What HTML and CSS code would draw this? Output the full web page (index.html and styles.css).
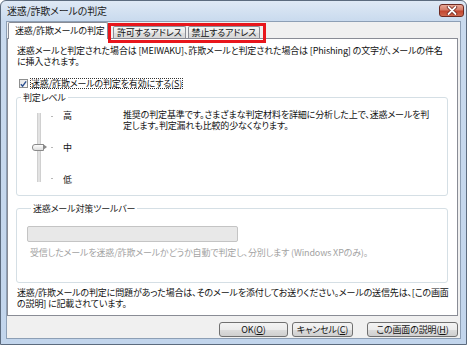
FILE: index.html
```html
<!DOCTYPE html>
<html lang="ja">
<head>
    <meta charset="UTF-8">
    <title>迷惑/詐欺メールの判定</title>
    <link rel="stylesheet" href="styles.css">
</head>
<body>
    <div class="window">
        <div class="titlebar">
            <span class="title">迷惑/詐欺メールの判定</span>
            <button class="close" aria-label="閉じる">
                <svg width="14" height="9" viewBox="0 0 14 9">
                    <path d="M3.5 1 L10.5 8 M10.5 1 L3.5 8" stroke="#6b1f17" stroke-width="3.4" stroke-linecap="round"/>
                    <path d="M3.5 1 L10.5 8 M10.5 1 L3.5 8" stroke="#ffffff" stroke-width="1.8" stroke-linecap="round"/>
                </svg>
            </button>
        </div>

        <div class="dialog">
            <div class="tabs">
                <div class="tab active">迷惑/詐欺メールの判定</div>
                <div class="highlight">
                    <div class="tab">許可するアドレス</div>
                    <div class="tab">禁止するアドレス</div>
                </div>
            </div>

            <div class="panel">
                <p class="intro">迷惑メールと判定された場合は [MEIWAKU]、詐欺メールと判定された場合は [Phishing] の文字が、メールの件名<br>に挿入されます。</p>

                <label class="check">
                    <span class="box">
                        <svg width="8" height="8" viewBox="0 0 8 8">
                            <path d="M1 4.2 L3 6.5 L7 1" fill="none" stroke="#2b4f8f" stroke-width="1.6"/>
                        </svg>
                    </span>
                    <span class="focus">迷惑/詐欺メールの判定を有効にする(<u>S</u>)</span>
                </label>

                <fieldset class="group">
                    <legend>判定レベル</legend>
                    <div class="level-row">
                        <div class="slider">
                            <span class="track"></span>
                            <span class="tick top"></span>
                            <span class="tick mid"></span>
                            <span class="tick bottom"></span>
                            <span class="thumb"></span>
                        </div>
                        <div class="levels">
                            <span>高</span>
                            <span>中</span>
                            <span>低</span>
                        </div>
                        <p class="desc">推奨の判定基準です。さまざまな判定材料を詳細に分析した上で、迷惑メールを判<br>定します。判定漏れも比較的少なくなります。</p>
                    </div>
                </fieldset>

                <fieldset class="group toolbar">
                    <legend>迷惑メール対策ツールバー</legend>
                    <div class="combo"></div>
                    <p class="disabled">受信したメールを迷惑/詐欺メールかどうか自動で判定し、分別します (Windows XPのみ)。</p>
                </fieldset>

                <p class="note">迷惑/詐欺メールの判定に問題があった場合は、そのメールを添付してお送りください。メールの送信先は、[この画面<br>の説明] に記載されています。</p>
            </div>

            <div class="buttons">
                <button class="btn ok">OK(<u>O</u>)</button>
                <button class="btn cancel">キャンセル(<u>C</u>)</button>
                <button class="btn help">この画面の説明(<u>H</u>)</button>
            </div>
        </div>
    </div>
</body>
</html>
```

FILE: styles.css
```css
body {
    margin: 0;
    font-family: "Noto Sans CJK JP", "Noto Sans", sans-serif;
    font-size: 9px;
    line-height: 11px;
    letter-spacing: -0.15px;
    font-feature-settings: "palt";
    color: #111;
    background: #ffffff;
}

p {
    margin: 0;
    white-space: nowrap;
}

.window {
    width: 467px;
    height: 345px;
    box-sizing: border-box;
    border: 1px solid #5c6b7e;
    border-radius: 6px 6px 0 0;
    padding: 0 5px 5px 5px;
    background: linear-gradient(180deg, #dfe9f5 0px, #c9daee 20px, #c2d5ec 100%);
    display: flex;
    flex-direction: column;
}

.titlebar {
    height: 20px;
    display: flex;
    align-items: center;
    justify-content: space-between;
}

.title {
    font-size: 10px;
    color: #1b1b1b;
    margin-left: 1px;
    margin-top: -1px;
}

.close {
    width: 25px;
    height: 13px;
    margin-right: -3px;
    margin-top: -2px;
    padding: 0;
    border: 1px solid #6e2a22;
    border-radius: 3px;
    background: linear-gradient(180deg, #e8a896 0%, #d47c68 45%, #c2452f 55%, #cf6a50 100%);
    display: flex;
    align-items: center;
    justify-content: center;
}

.dialog {
    flex: 1;
    background: #f0f0f0;
    border: 1px solid #8d9fb5;
    display: flex;
    flex-direction: column;
}

.tabs {
    height: 16px;
    display: flex;
    align-items: flex-start;
    padding-left: 1px;
    position: relative;
    z-index: 1;
}

.tab {
    box-sizing: border-box;
    height: 12px;
    padding: 0 3px;
    border: 1px solid #898c95;
    border-bottom: none;
    border-radius: 2px 2px 0 0;
    background: linear-gradient(180deg, #f4f4f4 0%, #e9e9e9 50%, #dcdcdc 51%, #d8d8d8 100%);
    line-height: 11px;
    white-space: nowrap;
}

.tab.active {
    height: 17px;
    width: 100px;
    padding: 0 0 0 6px;
    background: #ffffff;
    line-height: 16px;
}

.highlight {
    box-sizing: border-box;
    height: 20px;
    margin-top: 1px;
    border: 3px solid #e8161c;
    padding: 0 3px 0 2px;
    display: flex;
    gap: 2px;
}

.panel {
    box-sizing: border-box;
    height: 278px;
    margin-right: 2px;
    background: #ffffff;
    border: 1px solid #898c95;
    padding: 6px 0 0 0;
}

.intro {
    padding-left: 9px;
}

.check {
    display: flex;
    align-items: center;
    margin: 11px 0 0 11px;
    height: 11px;
}

.box {
    box-sizing: border-box;
    width: 9px;
    height: 9px;
    border: 1px solid #8e8f8f;
    background: linear-gradient(135deg, #e4e4e4, #fafafa);
    display: flex;
    align-items: center;
    justify-content: center;
    margin-right: 2px;
}

.focus {
    outline: 1px dotted #333;
    outline-offset: -1px;
    padding: 0 1px;
}

.group {
    margin: 3px 9px 0 8px;
    padding: 0;
    border: 1px solid #d5dfe5;
    border-radius: 3px;
}

.group legend {
    margin-left: 4px;
    padding: 0 2px;
    color: #222;
}

.level-row {
    display: flex;
    margin-top: 7px;
    margin-bottom: 10px;
    padding-left: 10px;
    height: 75px;
}

.slider {
    position: relative;
    width: 36px;
}

.track {
    position: absolute;
    left: 10px;
    top: 3px;
    width: 2px;
    height: 69px;
    background: #e2e2e2;
    border: 1px solid #d0d0d0;
    border-width: 0 1px;
}

.tick {
    position: absolute;
    left: 24px;
    width: 2px;
    height: 1px;
    background: #b8b8b8;
}

.tick.top { top: 6px; }
.tick.mid { top: 37px; }
.tick.bottom { top: 68px; }

.thumb {
    position: absolute;
    left: 5px;
    top: 34px;
    width: 12px;
    height: 7px;
    box-sizing: border-box;
    border: 1px solid #8a8a8a;
    border-radius: 3px 0 0 3px;
    background: linear-gradient(180deg, #fdfdfd, #dedede);
}

.thumb::after {
    content: "";
    position: absolute;
    right: -4px;
    top: -1px;
    border-style: solid;
    border-width: 3.5px 0 3.5px 4px;
    border-color: transparent transparent transparent #8a8a8a;
}

.levels {
    width: 60px;
    display: flex;
    flex-direction: column;
    justify-content: space-between;
}

.desc {
    margin-top: -1px;
}

.toolbar {
    margin-top: 7px;
    padding: 0 0 24px 10px;
}

.combo {
    width: 211px;
    height: 16px;
    box-sizing: border-box;
    margin-top: 12px;
    border: 1px solid #c4c4c4;
    border-radius: 2px;
    background: #e8e8e8;
}

.disabled {
    margin: 5px 0 0 3px;
    color: #a3a3a3;
}

.note {
    margin: 4px 0 0 9px;
}

.buttons {
    display: flex;
    justify-content: flex-end;
    align-items: flex-start;
    padding: 6px 2px 0 0;
}

.btn {
    height: 15px;
    box-sizing: border-box;
    padding: 0;
    border: 1px solid #707070;
    border-radius: 3px;
    background: linear-gradient(180deg, #f3f3f3 0%, #ebebeb 50%, #dddddd 51%, #cfcfcf 100%);
    font-family: inherit;
    font-size: 9px;
    line-height: 13px;
    letter-spacing: -0.15px;
    font-feature-settings: "palt";
    color: #111;
}

.ok { width: 69px; }
.cancel { width: 61px; margin-left: 4px; }
.help { width: 91px; margin-left: 14px; }
```
